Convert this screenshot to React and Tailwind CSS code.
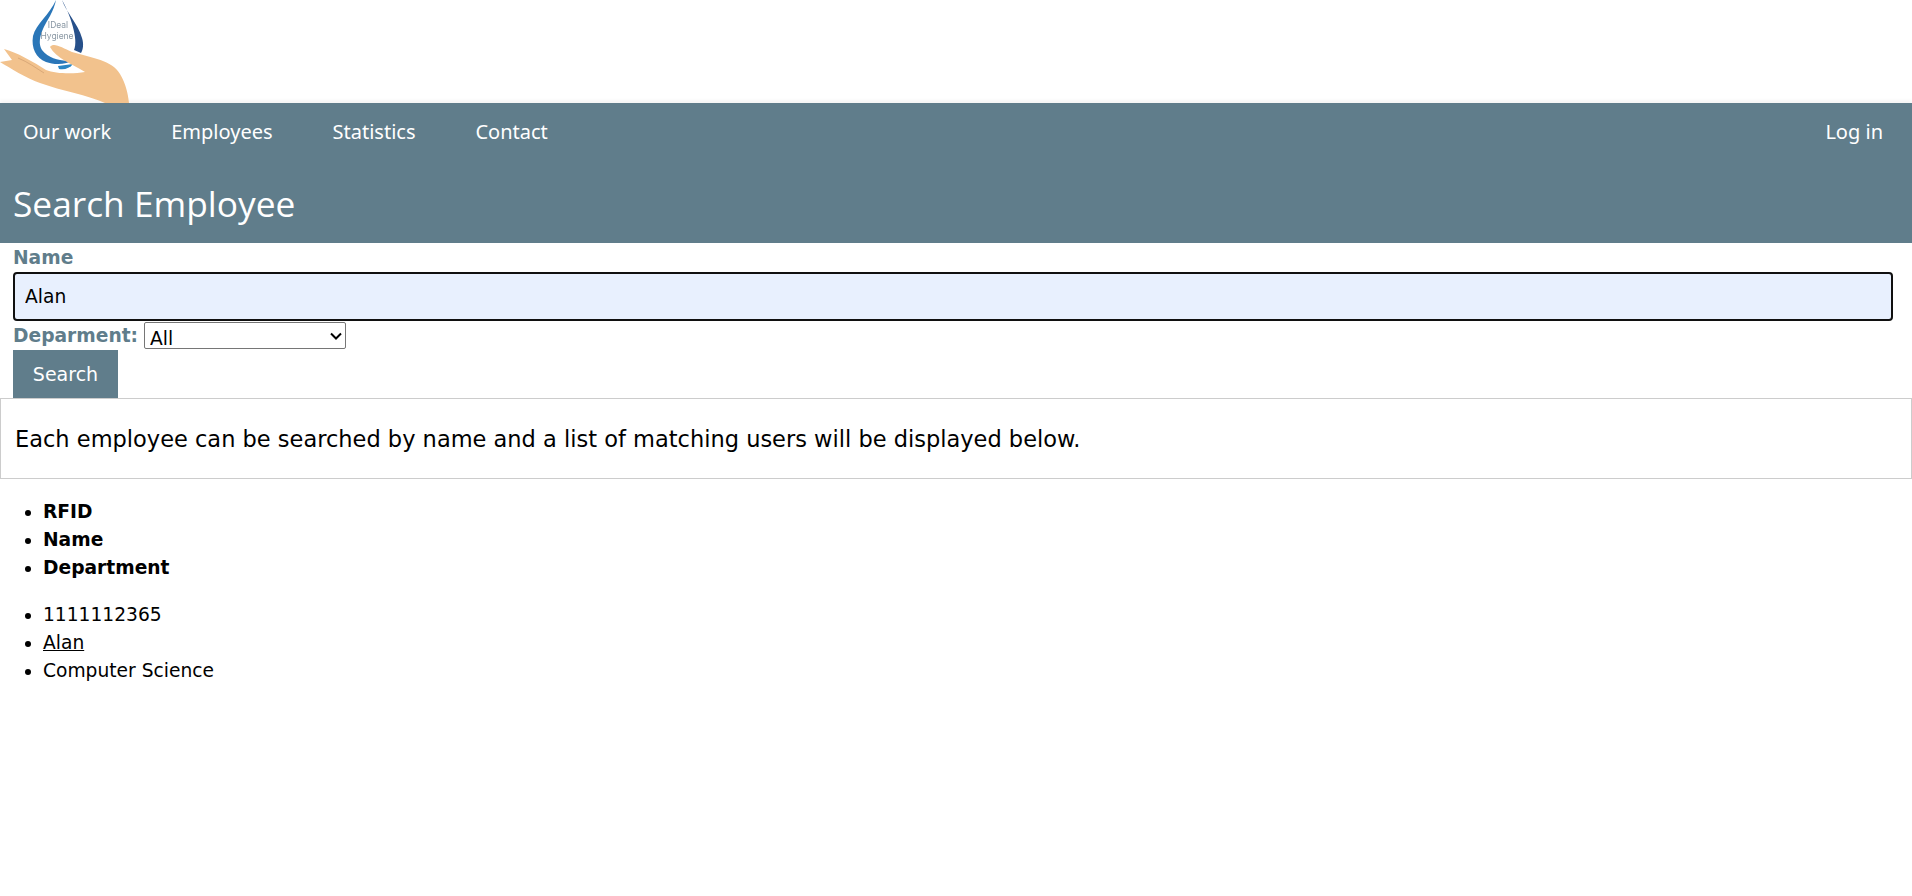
const navLinks = ["Our work", "Employees", "Statistics", "Contact"];

const Logo = () => (
  <svg width="130" height="103" viewBox="0 0 130 103" className="block blur-[0.4px]">
    {/* drop */}
    <path d="M56 0 C50 14 36 24 33 36 C31 48 36 58 46 62 C54 65 66 65 74 60 C64 62 50 60 42 50 C36 40 44 26 50 16 C53 10 55 5 56 0 Z" fill="#2a76b8" />
    <path d="M62 0 C66 12 78 24 82 38 C84 44 83 50 81 53 L74 50 C79 40 70 14 62 0 Z" fill="#27508a" />
    <path d="M58 66 L73 64 C70 68 65 70 59 69 Z" fill="#2a86c4" />
    <text x="58" y="28" textAnchor="middle" fontSize="8.5" fill="#8a98a4" fontFamily="Inter, sans-serif">IDeal</text>
    <text x="57" y="39" textAnchor="middle" fontSize="8.5" fill="#8a98a4" fontFamily="Inter, sans-serif">Hygiene</text>
    {/* hand */}
    <path
      d="M129 103 L105 103 C88 95 62 91 40 83 C26 78 10 68 0 62 L12 60 L4 49 C16 52 34 62 46 70 C56 74 74 74 85 72 C72 64 56 58 50 47 C54 42 62 48 72 52 C92 58 112 60 120 74 C126 84 128 94 129 103 Z"
      fill="#f2c28d"
    />
    <path d="M18 58 C28 62 36 68 44 73" stroke="#d9a878" strokeWidth="1" fill="none" />
  </svg>
);

const BulletList = ({ className, children }) => (
  <ul className={`list-disc pl-[43px] text-[18.67px] leading-[28px] text-black ${className}`}>{children}</ul>
);

export default function App() {
  return (
    <div className="min-h-screen bg-white font-['DejaVu_Sans',sans-serif]">
      <div className="h-[103px] bg-white">
        <Logo />
      </div>

      <div className="h-[140px] bg-[#607d8b] shadow-[0_-3px_3px_rgba(0,0,0,0.04)]">
        <nav className="flex h-[58px] items-center justify-between pl-[23px] pr-[29px] font-['Noto_Sans',sans-serif] text-[20px] text-white">
          <div className="flex gap-[60px]">
            {navLinks.map((link) => (
              <a key={link}>{link}</a>
            ))}
          </div>
          <a>Log in</a>
        </nav>
        <h1 className="pl-[13px] pt-[17px] font-['Open_Sans',sans-serif] text-[35.3px] leading-[50px] text-white">
          Search Employee
        </h1>
      </div>

      <form>
        <div className="ml-[13px] mt-[4px] h-[25px] text-[18.67px] font-bold leading-[22px] text-[#607d8b]">Name</div>
        <input
          readOnly
          value="Alan"
          className="ml-[13px] block h-[49px] w-[1880px] rounded-[4px] border-2 border-[#101010] bg-[#e8f0fe] pl-[10px] text-[18.67px] text-black outline-none"
        />
        <div className="ml-[13px] flex h-[29px] items-center gap-[6px]">
          <label className="text-[18.67px] font-bold text-[#607d8b]">Deparment:</label>
          <div className="relative">
            <select className="block h-[27px] w-[202px] appearance-none rounded-[2px] border border-[#767676] bg-white pl-[5px] pt-[2px] text-[18.67px] text-black">
              <option>All</option>
            </select>
            <svg
              width="12"
              height="8"
              viewBox="0 0 12 8"
              className="pointer-events-none absolute right-[4px] top-[10px]"
            >
              <path d="M1 1.5 L6 6.5 L11 1.5" stroke="#000" strokeWidth="2" fill="none" />
            </svg>
          </div>
        </div>
        <button
          type="button"
          className="ml-[13px] block h-[48px] w-[105px] bg-[#607d8b] text-[19px] text-white"
        >
          Search
        </button>
      </form>

      <div className="flex h-[81px] items-center border border-[#cccccc] pl-[14px] pt-[2px] text-[22.5px] text-black">
        Each employee can be searched by name and a list of matching users will be displayed below.
      </div>

      <BulletList className="mt-[19px] font-bold">
        <li>RFID</li>
        <li>Name</li>
        <li>Department</li>
      </BulletList>
      <BulletList className="mt-[19px]">
        <li>1111112365</li>
        <li>
          <a className="underline">Alan</a>
        </li>
        <li>Computer Science</li>
      </BulletList>
    </div>
  );
}
